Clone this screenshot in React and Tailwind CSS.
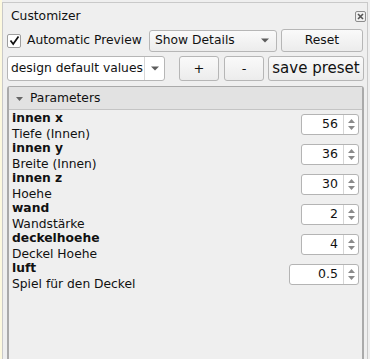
import React from "react";

const params = [
  { name: "innen x", desc: "Tiefe (Innen)", value: "56", w: 58 },
  { name: "innen y", desc: "Breite (Innen)", value: "36", w: 58 },
  { name: "innen z", desc: "Hoehe", value: "30", w: 58 },
  { name: "wand", desc: "Wandstärke", value: "2", w: 58 },
  { name: "deckelhoehe", desc: "Deckel Hoehe", value: "4", w: 58 },
  { name: "luft", desc: "Spiel für den Deckel", value: "0.5", w: 70 },
];

const DownArrow = ({ className = "" }) => (
  <svg width="8" height="5" viewBox="0 0 8 5" className={className}>
    <path d="M0 0.5 L8 0.5 L4 4.5 Z" fill="#5c5c5c" />
  </svg>
);

const SpinBox = ({ value, w }) => (
  <div
    className="flex h-[21px] bg-white border border-[#b4b4b4] rounded-[3px]"
    style={{ width: w }}
  >
    <div className="flex-1 flex items-center justify-end pr-[5px] text-[12.5px] text-[#111]">
      {value}
    </div>
    <div className="w-[15px] border-l border-[#d6d6d6] flex flex-col items-center justify-center gap-[3px]">
      <svg width="7" height="4" viewBox="0 0 7 4">
        <path d="M0 4 L7 4 L3.5 0 Z" fill="#8a8a8a" />
      </svg>
      <svg width="7" height="4" viewBox="0 0 7 4">
        <path d="M0 0 L7 0 L3.5 4 Z" fill="#8a8a8a" />
      </svg>
    </div>
  </div>
);

const Button = ({ children, className = "" }) => (
  <div
    className={`flex items-center justify-center whitespace-nowrap border border-[#b6b6b6] rounded-[3px] bg-gradient-to-b from-[#fafafa] to-[#ececec] text-[#111] ${className}`}
  >
    {children}
  </div>
);

export default function App() {
  return (
    <div
      className="w-[370px] h-[359px] bg-[#efefef] flex overflow-hidden text-[#111] text-[12.3px] whitespace-nowrap"
      style={{ fontFamily: '"DejaVu Sans", sans-serif' }}
    >
      {/* yellow strip of the neighbouring editor */}
      <div className="w-[2px] h-full bg-[#fdf9df]" />

      <div className="w-[366px] mt-[2px] border-t border-l border-r border-[#c9c9c9] flex flex-col">
        {/* title bar */}
        <div className="h-[25px] flex items-start justify-between pl-[8px] pr-[1px]">
          <span className="mt-[4px]">Customizer</span>
          <div className="mt-[8px] w-[11px] h-[11px] border border-[#8c8c8c] rounded-[2px] flex items-center justify-center">
            <svg width="7" height="7" viewBox="0 0 7 7">
              <path d="M1 1 L6 6 M6 1 L1 6" stroke="#555" strokeWidth="1.6" />
            </svg>
          </div>
        </div>

        {/* row 1 */}
        <div className="flex items-center h-[23px] pl-[4px] mt-[1px]">
          <div className="w-[14px] h-[14px] bg-white border border-[#9e9e9e] rounded-[2px] flex items-center justify-center">
            <svg width="11" height="11" viewBox="0 0 11 11">
              <path d="M1.5 5.5 L4.2 9 L9.5 1.5" stroke="#111" strokeWidth="1.7" fill="none" />
            </svg>
          </div>
          <span className="ml-[6px] w-[122px]">Automatic Preview</span>
          <div className="w-[128px] h-[22px] border border-[#b6b6b6] rounded-[3px] bg-gradient-to-b from-[#fafafa] to-[#ececec] flex items-center justify-between pl-[5px] pr-[7px]">
            <span>Show Details</span>
            <DownArrow />
          </div>
          <Button className="ml-[4px] w-[82px] h-[23px]">Reset</Button>
        </div>

        {/* row 2 */}
        <div className="flex items-center h-[25px] pl-[4px] mt-[4px]">
          <div className="w-[158px] h-[25px] bg-white border border-[#b6b6b6] rounded-[3px] flex">
            <div className="flex-1 flex items-center pl-[3px]">design default values</div>
            <div className="w-[20px] border-l border-[#d6d6d6] flex items-center justify-center">
              <DownArrow />
            </div>
          </div>
          <Button className="ml-[14px] w-[40px] h-[25px] text-[13px]">+</Button>
          <Button className="ml-[5px] w-[40px] h-[25px] text-[13px]">-</Button>
          <Button className="ml-[4px] w-[96px] h-[25px] text-[15px]">save preset</Button>
        </div>

        {/* parameters group */}
        <div className="mt-[5px] ml-[4px] w-[357px] flex-1 border-l-2 border-r-2 border-t border-[#aaaaaa] rounded-t-[3px] flex flex-col">
          <div className="h-[23px] bg-[#e2e2e2] border-b border-[#c4c4c4] flex items-center pl-[7px] pt-[1px]">
            <svg width="7" height="4" viewBox="0 0 7 4">
              <path d="M0 0 L7 0 L3.5 4 Z" fill="#666" />
            </svg>
            <span className="ml-[7px]">Parameters</span>
          </div>
          <div className="flex flex-col">
            {params.map((p) => (
              <div key={p.name} className="h-[30px] flex items-start justify-between pl-[3px] pr-[3px]">
                <div className="flex flex-col leading-[16px]">
                  <span className="font-bold">{p.name}</span>
                  <span>{p.desc}</span>
                </div>
                <div className="mt-[4px]">
                  <SpinBox value={p.value} w={p.w} />
                </div>
              </div>
            ))}
          </div>
        </div>
      </div>
    </div>
  );
}
